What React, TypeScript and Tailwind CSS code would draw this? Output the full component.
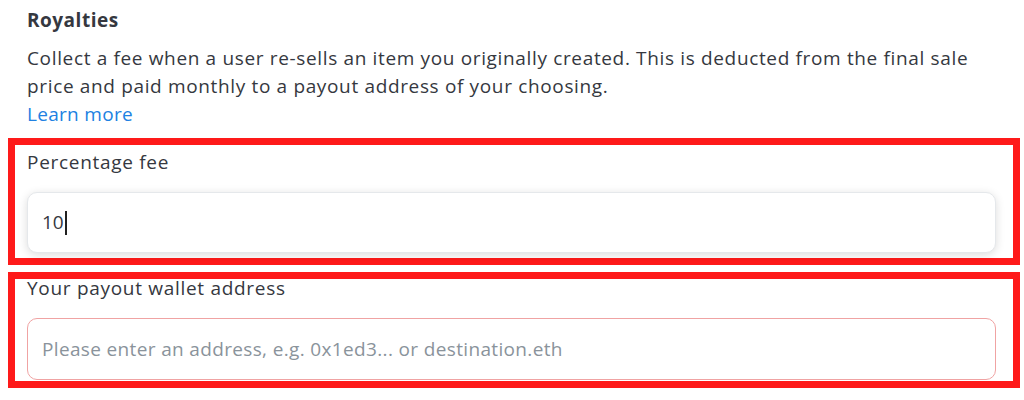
export default function App() {
  return (
    <div className="w-[1024px] h-[400px] bg-white pl-2 pr-1 pt-[6px] font-['Open_Sans',sans-serif] text-[#353840]">
      {/* Heading + description */}
      <div className="pl-[19px]">
        <h2 className="text-[19px] leading-[28px] font-bold tracking-[0.5px]">Royalties</h2>
        <p className="mt-[10px] text-[19px] leading-[28px] tracking-[0.65px]">
          Collect a fee when a user re-sells an item you originally created. This is deducted from the final sale
          <br />
          price and paid monthly to a payout address of your choosing.
        </p>
        <a className="block text-[19px] leading-[28px] tracking-[0.3px] text-[#2081e2]">Learn more</a>
      </div>

      {/* Percentage fee */}
      <div className="mt-[10px] border-[7px] border-[#fe1a1a] pl-3 pr-[17px] pt-[3px] pb-[5px]">
        <div className="text-[19px] leading-[28px] tracking-[0.7px]">Percentage fee</div>
        <div className="mt-4 flex h-[61px] items-center rounded-[10px] border border-[#e5e8eb] bg-white px-[14px] shadow-[0_2px_10px_rgba(0,0,0,0.14)]">
          <span className="text-[19px]">10</span>
          <span className="ml-[1px] h-[24px] w-[2px] bg-[#202020]" />
        </div>
      </div>

      {/* Payout wallet */}
      <div className="mt-[7px] border-[7px] border-[#fe1a1a] pl-3 pr-[17px] pb-[1px]">
        <div className="text-[19px] leading-[18px] tracking-[0.7px]">Your payout wallet address</div>
        <div className="mt-[21px] flex h-[62px] items-center rounded-[10px] border border-[#f0a3a3] bg-white px-[14px]">
          <span className="text-[19px] tracking-[0.35px] text-[#8a939b]">
            Please enter an address, e.g. 0x1ed3... or destination.eth
          </span>
        </div>
      </div>
    </div>
  );
}
